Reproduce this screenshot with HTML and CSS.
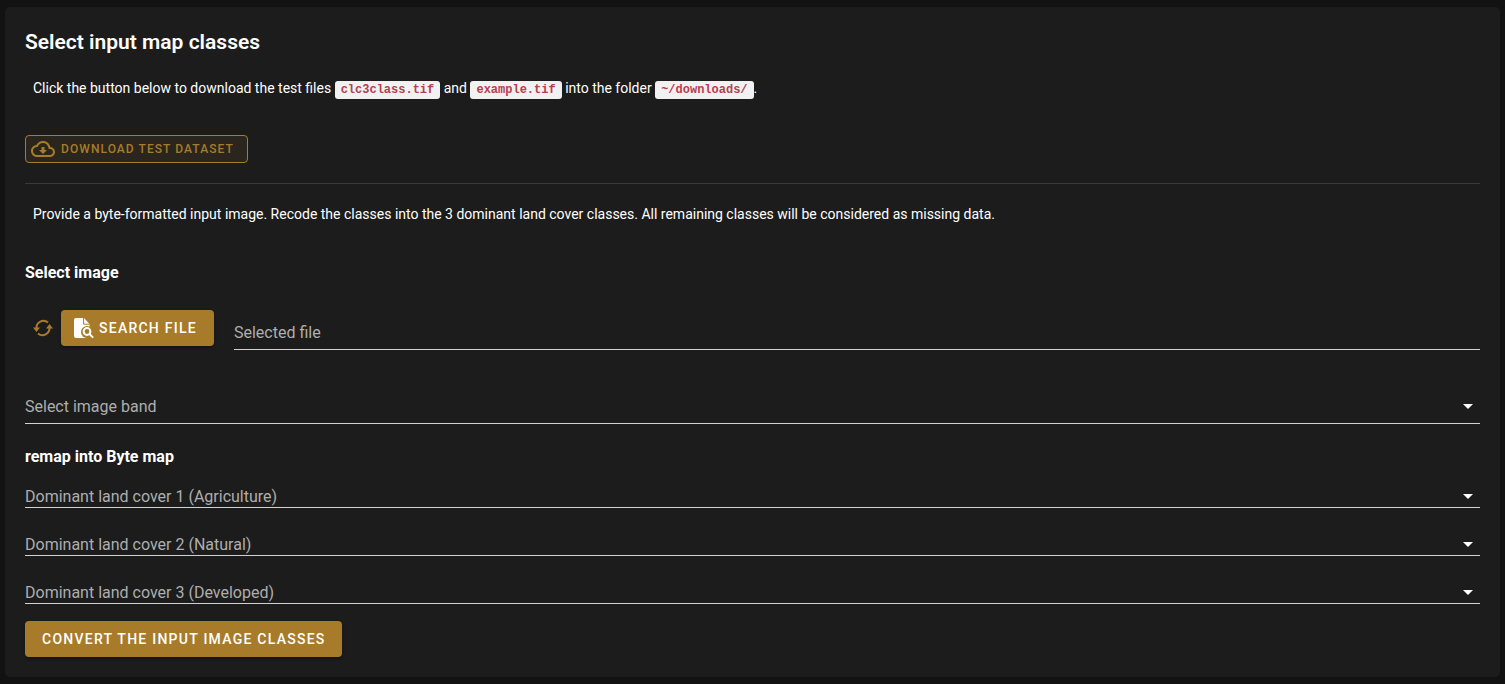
FILE: index.html
```html
<!DOCTYPE html>
<html lang="en">
<head>
<meta charset="utf-8">
<title>Select input map classes</title>
<link rel="stylesheet" href="styles.css">
</head>
<body>
<main class="card">
  <h2 class="title">Select input map classes</h2>
  <p class="text intro">Click the button below to download the test files <code>clc3class.tif</code> and <code>example.tif</code> into the folder <code>~/downloads/</code>.</p>
  <div class="dl-row">
    <button class="btn-outline" type="button">
      <svg class="dl-icon" viewBox="0 0 24 24" width="24" height="24"><path fill="currentColor" d="M19.35 10.04C18.67 6.59 15.64 4 12 4 9.11 4 6.6 5.64 5.35 8.04 2.34 8.36 0 10.91 0 14c0 3.31 2.69 6 6 6h13c2.76 0 5-2.24 5-5 0-2.64-2.05-4.78-4.65-4.96zM19 18H6c-2.21 0-4-1.79-4-4 0-2.05 1.53-3.76 3.56-3.97l1.07-.11.5-.95C8.08 7.14 9.94 6 12 6c2.62 0 4.88 1.86 5.39 4.43l.3 1.5 1.53.11c1.56.1 2.78 1.41 2.78 2.96 0 1.65-1.35 3-3 3zM13.5 10h-3v3H8l4 4 4-4h-2.5z"/></svg>
      Download test dataset
    </button>
  </div>
  <hr class="divider">
  <p class="text provide">Provide a byte-formatted input image. Recode the classes into the 3 dominant land cover classes. All remaining classes will be considered as missing data.</p>
  <h3 class="sub select-image">Select image</h3>
  <div class="file-row">
    <svg class="sync" viewBox="0 0 24 24" width="24" height="24">
      <path class="sync-arc" d="M5.5 12.5A7 7 0 0 1 17 6.6"/>
      <path class="sync-arc" d="M18.5 11.5A7 7 0 0 1 7 17.4"/>
      <path class="sync-head" d="M2 11.5h7L5.5 16zM15 12.5h7L18.5 8z"/>
    </svg>
    <button class="btn" type="button">
      <svg class="file-icon" viewBox="0 0 24 24" width="24" height="24">
        <path class="doc" d="M5 2h8l5.5 6v14H5a2 2 0 0 1-2-2V4a2 2 0 0 1 2-2z"/>
        <path class="doc-fold" d="M12.6 2v6.2h6"/>
        <circle class="doc-cut" cx="16" cy="16" r="6"/>
        <rect class="doc-cut" x="16" y="16" width="8" height="8"/>
        <circle class="lens" cx="16" cy="15.5" r="3.4"/>
        <path class="lens" d="M18.5 18l3.6 3.6"/>
      </svg>
      Search file
    </button>
    <div class="field file-field"><span>Selected file</span></div>
  </div>
  <div class="field select band"><span>Select image band</span><i class="caret"></i></div>
  <h3 class="sub remap">remap into Byte map</h3>
  <div class="field select lc first"><span>Dominant land cover 1 (Agriculture)</span><i class="caret"></i></div>
  <div class="field select lc"><span>Dominant land cover 2 (Natural)</span><i class="caret"></i></div>
  <div class="field select lc"><span>Dominant land cover 3 (Developed)</span><i class="caret"></i></div>
  <button class="btn convert" type="button">Convert the input image classes</button>
</main>
</body>
</html>
```
FILE: styles.css
```css
* { box-sizing: border-box; }
html, body { height: 100%; }
body {
  margin: 0;
  padding: 7px 5px;
  background: #121212;
  color: #fff;
  font-family: Roboto, "Liberation Sans", sans-serif;
  overflow: hidden;
}
.card {
  height: 670px;
  padding: 20px;
  background: #1c1c1c;
  border-radius: 5px;
  display: flex;
  flex-direction: column;
  align-items: stretch;
}
.title {
  margin: 0;
  font-size: 21px;
  font-weight: 600;
  line-height: 30px;
}
.text {
  margin: 0;
  padding-left: 8px;
  font-size: 14px;
  line-height: 20px;
  color: #fff;
}
.intro { margin-top: 21px; }
code {
  display: inline-block;
  padding: 0 6px;
  background: #f1f1f1;
  color: #b5404f;
  border-radius: 3px;
  font-family: "Liberation Mono", monospace;
  font-size: 12px;
  font-weight: 700;
  line-height: 18px;
  vertical-align: baseline;
}
.dl-row { margin-top: 36px; display: flex; }
button {
  font-family: inherit;
  text-transform: uppercase;
  cursor: pointer;
  display: inline-flex;
  align-items: center;
}
.btn-outline {
  height: 28px;
  padding: 0 13px 0 5px;
  background: rgba(168, 123, 43, 0.1);
  border: 1px solid #a87b2b;
  border-radius: 4px;
  color: #a87b2b;
  font-size: 12px;
  font-weight: 500;
  letter-spacing: 1.07px;
}
.dl-icon { margin-right: 6px; }
.divider {
  width: 100%;
  margin: 20px 0 0;
  border: 0;
  border-top: 1px solid #3a3a3a;
}
.provide { margin-top: 20px; }
.sub {
  margin: 0;
  font-size: 16px;
  font-weight: 700;
  line-height: 20px;
}
.select-image { margin-top: 39px; }
.file-row {
  margin-top: 27px;
  display: flex;
  align-items: flex-start;
}
.sync { margin: 6px 6px 0 6px; width: 24px; height: 24px; flex: none; }
.sync-arc { fill: none; stroke: #a87b2b; stroke-width: 2; }
.sync-head { fill: #a87b2b; }
.btn {
  height: 36px;
  background: #a87b2b;
  border: 0;
  border-radius: 4px;
  color: #fff;
  font-size: 14px;
  font-weight: 500;
  letter-spacing: 1.25px;
  box-shadow: 0 2px 3px rgba(0, 0, 0, 0.3);
}
.file-row .btn { padding: 0 17px 0 10px; flex: none; }
.file-icon { margin-right: 4px; }
.doc { fill: #fff; }
.doc-fold { fill: none; stroke: #a87b2b; stroke-width: 1; }
.doc-cut { fill: #a87b2b; }
.lens { fill: none; stroke: #fff; stroke-width: 2; }
.field {
  display: flex;
  align-items: center;
  justify-content: space-between;
  border-bottom: 1px solid #d2d2d2;
  color: #aeaeae;
  font-size: 16px;
}
.file-field {
  flex: 1;
  margin-left: 20px;
  margin-top: 8px;
  height: 32px;
  padding-bottom: 2px;
}
.band { margin-top: 34px; height: 40px; padding-top: 6px; }
.remap { margin-top: 23px; }
.lc { height: 28px; margin-top: 20px; padding-top: 6px; }
.lc.first { height: 31px; padding-top: 9px; margin-top: 10px; }
.caret {
  width: 0;
  height: 0;
  margin-right: 7px;
  border-left: 5px solid transparent;
  border-right: 5px solid transparent;
  border-top: 5px solid #fff;
}
.convert {
  align-self: flex-start;
  margin-top: 17px;
  padding: 0 16px 0 17px;
}
```
